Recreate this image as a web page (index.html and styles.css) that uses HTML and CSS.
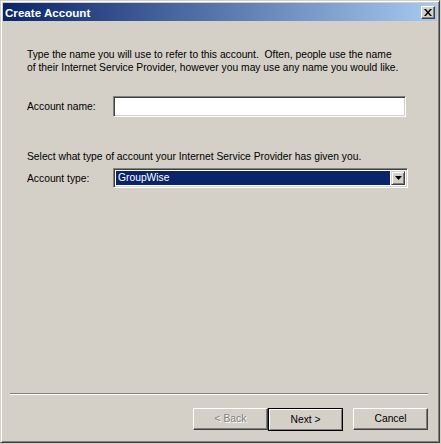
FILE: index.html
```html
<!DOCTYPE html>
<html lang="en">

<head>
    <meta charset="UTF-8">
    <title>Create Account</title>
    <link rel="stylesheet" href="styles.css">
</head>

<body>
    <div class="window">
        <div class="titlebar">
            <span class="title">Create Account</span>
            <span class="close">
                <svg width="8" height="7" viewBox="0 0 8 7">
                    <path d="M0 0h2l2 2.5 2-2.5h2l-3 3.5 3 3.5h-2l-2-2.5-2 2.5h-2l3-3.5z" fill="#000" />
                </svg>
            </span>
        </div>

        <div class="content">
            <p class="intro">Type the name you will use to refer to this account.&nbsp; Often, people use the name
                <br>of their Internet Service Provider, however you may use any name you would like.</p>

            <div class="field">
                <label>Account name:</label>
                <div class="textbox"></div>
            </div>

            <p class="hint">Select what type of account your Internet Service Provider has given you.</p>

            <div class="field">
                <label>Account type:</label>
                <div class="combo">
                    <span class="selected">GroupWise</span>
                    <span class="arrow">
                        <svg width="7" height="4" viewBox="0 0 7 4">
                            <path d="M0 0h7l-3.5 4z" fill="#000" />
                        </svg>
                    </span>
                </div>
            </div>

            <div class="spacer"></div>
            <div class="separator"></div>

            <!-- wizard buttons -->
            <div class="buttons">
                <span class="btn disabled">&lt; Back</span>
                <span class="btn default">Next &gt;</span>
                <span class="btn cancel">Cancel</span>
            </div>
        </div>
    </div>
</body>

</html>
```

FILE: styles.css
```css
html,
body {
    margin: 0;
    padding: 0;
    background: #d4d0c8;
    font-family: "Liberation Sans", Arial, sans-serif;
    font-size: 10.3px;
    color: #000;
}

.window {
    width: 440px;
    height: 443px;
    box-sizing: border-box;
    border: 1px solid;
    border-color: #d4d0c8 #404040 #404040 #d4d0c8;
    box-shadow: inset 1px 1px #fff, inset -1px -1px #808080;
    padding: 2px;
    display: flex;
    flex-direction: column;
    background: #d4d0c8;
}

.titlebar {
    height: 18px;
    display: flex;
    align-items: center;
    justify-content: space-between;
    padding: 0 2px 0 2px;
    background: linear-gradient(to right, #0a246a, #a6caf0);
}

.title {
    color: #fff;
    font-weight: bold;
    font-size: 11.6px;
}

.close {
    width: 12px;
    height: 11px;
    display: flex;
    align-items: center;
    justify-content: center;
    background: #d4d0c8;
    border: 1px solid;
    border-color: #fff #404040 #404040 #fff;
    box-shadow: inset -1px -1px #808080;
}

.content {
    flex: 1;
    display: flex;
    flex-direction: column;
    padding: 0 9px 10px 24px;
}

.intro {
    margin: 27px 0 0 0;
    line-height: 13px;
}

.hint {
    margin: 34px 0 0 0;
    line-height: 12px;
}

.field {
    display: flex;
    align-items: center;
    margin-top: 22px;
}

.hint + .field {
    margin-top: 5px;
}

.field label {
    width: 86px;
}

.textbox {
    width: 291px;
    height: 19px;
    background: #fff;
    border: 1px solid;
    border-color: #808080 #fff #fff #808080;
    box-shadow: inset 1px 1px #404040, inset -1px -1px #d4d0c8;
}

.combo {
    width: 289px;
    height: 14px;
    display: flex;
    padding: 2px;
    gap: 1px;
    background: #fff;
    border: 1px solid;
    border-color: #808080 #fff #fff #808080;
    box-shadow: inset 1px 1px #404040, inset -1px -1px #d4d0c8;
}

.selected {
    flex: 1;
    background: #0a246a;
    color: #fff;
    padding-left: 2px;
    line-height: 14px;
}

.arrow {
    width: 12px;
    height: 12px;
    display: flex;
    align-items: center;
    justify-content: center;
    background: #d4d0c8;
    border: 1px solid;
    border-color: #d4d0c8 #404040 #404040 #d4d0c8;
    box-shadow: inset 1px 1px #fff, inset -1px -1px #808080;
}

.spacer {
    flex: 1;
}

.separator {
    height: 1px;
    margin-left: -17px;
    background: #808080;
    border-bottom: 1px solid #fff;
}

.buttons {
    display: flex;
    justify-content: flex-end;
    margin-top: 13px;
}

.btn {
    width: 73px;
    height: 19px;
    display: flex;
    align-items: center;
    justify-content: center;
    border: 1px solid;
    border-color: #fff #404040 #404040 #fff;
    box-shadow: inset -1px -1px #808080;
    padding-bottom: 1px;
}

.btn.default {
    width: 71px;
    height: 18px;
    outline: 1px solid #000;
    margin: 1px 1px 0 1px;
    border-color: #fff #808080 #808080 #fff;
    box-shadow: inset -1px -1px #d4d0c8, 1px 1px #404040;
}

.btn.cancel {
    margin-left: 10px;
}

.btn.disabled {
    color: #808080;
    text-shadow: 1px 1px #fff;
}
```
